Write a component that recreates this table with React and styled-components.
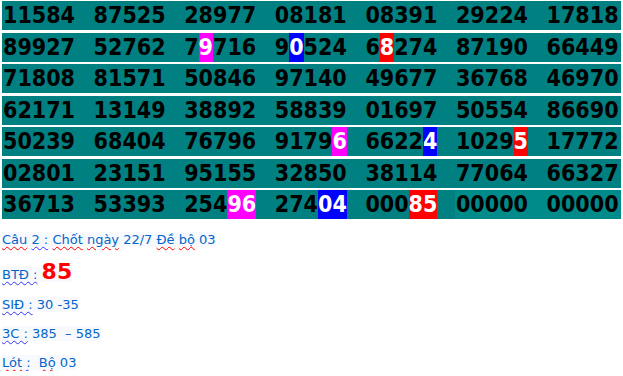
import React from "react";
import styled, { createGlobalStyle } from "styled-components";

const GlobalStyle = createGlobalStyle`
  body {
    margin: 0;
    background: #ffffff;
  }
`;

const rows = [
  ["11584", "87525", "28977", "08181", "08391", "29224", "17818"],
  ["89927", "52762", "7[m9]716", "9[b0]524", "6[r8]274", "87190", "66449"],
  ["71808", "81571", "50846", "97140", "49677", "36768", "46970"],
  ["62171", "13149", "38892", "58839", "01697", "50554", "86690"],
  ["50239", "68404", "76796", "9179[m6]", "6622[b4]", "1029[r5]", "17772"],
  ["02801", "23151", "95155", "32850", "38114", "77064", "66327"],
  ["36713", "53393", "254[m96]", "274[b04]", "000[r85]", "00000", "00000"],
];

const hl = { m: "#ff00ff", b: "#0000ff", r: "#ff0000" };

function renderNumber(s) {
  const parts = [];
  const re = /\[([mbr])(\d+)\]/g;
  let last = 0;
  let m;
  while ((m = re.exec(s))) {
    if (m.index > last) parts.push(s.slice(last, m.index));
    parts.push(
      <Mark key={m.index} $bg={hl[m[1]]}>
        {m[2]}
      </Mark>
    );
    last = m.index + m[0].length;
  }
  if (last < s.length) parts.push(s.slice(last));
  return parts;
}

export default function App() {
  return (
    <Page>
      <GlobalStyle />
      <Board>
        {rows.map((row, i) => (
          <Row key={i}>
            {row.map((n, j) => (
              <Cell key={j} $light={i === 6 && j >= 5}>
                {renderNumber(n)}
              </Cell>
            ))}
          </Row>
        ))}
      </Board>

      <Notes>
        <Line>
          <Text>
            <Red>Câu</Red> <Blue>2 :</Blue> <Red>Chốt</Red> <Red>ngày</Red> 22/7{" "}
            <Red>Đề</Red> <Red>bộ</Red> 03
          </Text>
        </Line>
        <Line $top={13}>
          <Text>
            <Blue>BTĐ :</Blue> <Big>85</Big>
          </Text>
        </Line>
        <Line $top={14}>
          <Text>
            <Blue>SIĐ :</Blue> 30 -35
          </Text>
        </Line>
        <Line $top={13}>
          <Text>
            <Blue>3C :</Blue> 385&nbsp; – 585
          </Text>
        </Line>
        <Line $top={13}>
          <Text>
            <Red>Lót</Red>
            <Blue> :</Blue>&nbsp; <Red>Bộ</Red> 03
          </Text>
        </Line>
      </Notes>
    </Page>
  );
}

const Page = styled.div`
  padding: 1px 2px 0 2px;
`;

const Board = styled.div`
  display: flex;
  flex-direction: column;
  gap: 2.5px;
  width: 619px;
`;

const Row = styled.div`
  display: grid;
  grid-template-columns: repeat(7, 90.6px);
  height: 29px;
  overflow: hidden;
  background: #008080;
`;

const Cell = styled.div`
  height: 29px;
  line-height: 29px;
  padding-left: 1px;
  white-space: nowrap;
  background: ${(p) => (p.$light ? "#008b8b" : "transparent")};
  font-family: "DejaVu Sans Condensed", "DejaVu Sans", sans-serif;
  font-stretch: condensed;
  font-weight: bold;
  font-size: 23px;
  color: #000000;
`;

const Mark = styled.span`
  display: inline-block;
  height: 29px;
  line-height: 29px;
  background: ${(p) => p.$bg};
  color: #ffffff;
`;

const Notes = styled.div`
  padding-top: 13px;
  font-family: "DejaVu Sans", sans-serif;
  font-size: 13px;
  color: #0066cc;
`;

const Line = styled.div`
  margin-top: ${(p) => p.$top || 0}px;
  line-height: 16px;
`;

const Text = styled.span`
  background: #f8f9fd;
  white-space: pre;
`;

const Red = styled.span`
  text-decoration: underline wavy #ff0000;
  text-decoration-thickness: 1px;
  text-underline-offset: 2px;
`;

const Blue = styled.span`
  text-decoration: underline wavy #3333ff;
  text-decoration-thickness: 1px;
  text-underline-offset: 2px;
`;

const Big = styled.span`
  font-size: 22px;
  font-weight: bold;
  color: #ff0000;
  line-height: 22px;
`;
